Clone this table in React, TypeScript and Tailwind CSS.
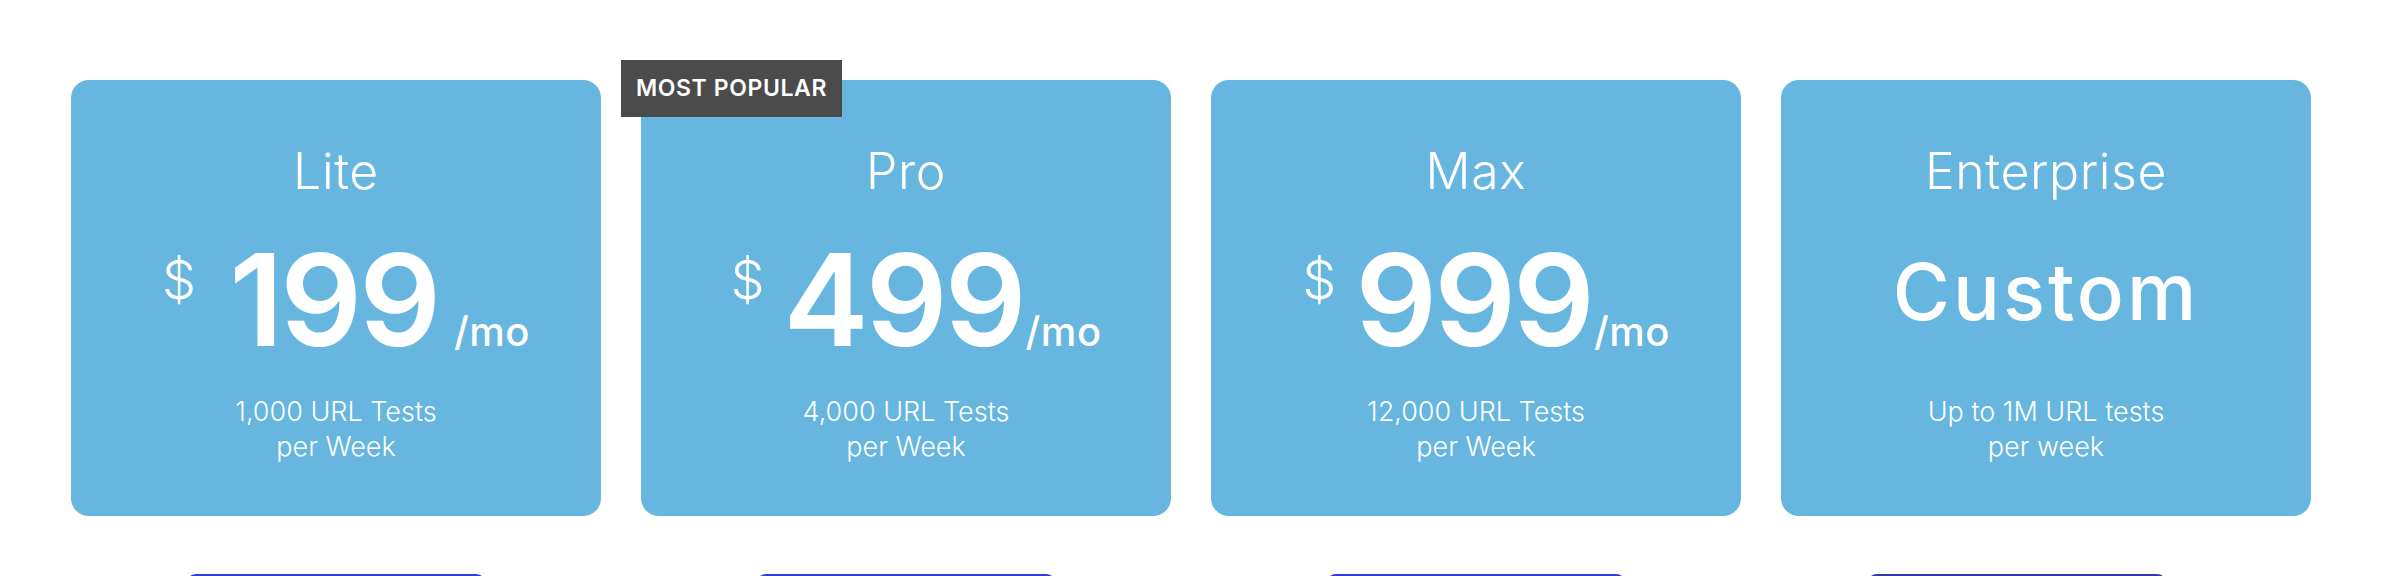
import React from "react";

type Plan = {
  name: string;
  price?: string;
  custom?: string;
  line1: string;
  line2: string;
  popular?: boolean;
  gapL: string;
  gapR: string;
  btn: string;
};

const plans: Plan[] = [
  { name: "Lite", price: "199", line1: "1,000 URL Tests", line2: "per Week", gapL: "mr-[33px]", gapR: "ml-[16px]", btn: "bg-[#2b3fd4]" },
  { name: "Pro", price: "499", line1: "4,000 URL Tests", line2: "per Week", popular: true, gapL: "mr-[19px]", gapR: "ml-[2px]", btn: "bg-[#2b3fd4]" },
  { name: "Max", price: "999", line1: "12,000 URL Tests", line2: "per Week", gapL: "mr-[19px]", gapR: "ml-[2px]", btn: "bg-[#2b3fd4]" },
  { name: "Enterprise", custom: "Custom", line1: "Up to 1M URL tests", line2: "per week", gapL: "", gapR: "", btn: "bg-[#2e3ca8] mr-[58px]" },
];

function Card({ p }: { p: Plan }) {
  return (
    <div className="flex w-[530px] shrink-0 flex-col items-center">
      <div className="relative flex h-[436px] w-full flex-col items-center rounded-[18px] bg-[#66b6e0] pt-[66px] text-white">
        {p.popular && (
          <div className="absolute left-[-20px] top-[-20px] flex h-[57px] w-[221px] items-center justify-center bg-[#4b4b4b] font-['Inter'] text-[23px] font-semibold tracking-[0.6px] text-white">
            MOST POPULAR
          </div>
        )}
        <div className="font-['Inter'] text-[50px] font-light leading-[50px] tracking-[0.6px]">{p.name}</div>
        <div className="mt-[40px] flex h-[128px] items-start justify-center">
          {p.price ? (
            <div className="flex items-baseline pl-[20px]">
              <span className={`self-start mt-[17px] font-['Inter'] text-[54px] font-light leading-[54px] ${p.gapL}`}>$</span>
              <span className="font-['Inter'] text-[128px] font-semibold leading-[128px] tracking-[-3px]">{p.price}</span>
              <span className={`font-['Inter'] text-[40px] font-medium leading-[40px] tracking-[0.5px] ${p.gapR}`}>/mo</span>
            </div>
          ) : (
            <div className="mt-[17px] font-['Inter'] text-[78px] font-medium leading-[78px] tracking-[3px]">{p.custom}</div>
          )}
        </div>
        <div className="mt-[30px] flex flex-col items-center font-['Inter'] text-[27px] font-light leading-[35px]">
          <span>{p.line1}</span>
          <span>{p.line2}</span>
        </div>
      </div>
      <div className={`mt-[58px] h-[60px] w-[300px] shrink-0 rounded-[10px] ${p.btn}`} />
    </div>
  );
}

export default function App() {
  return (
    <div className="h-[576px] w-full overflow-hidden bg-white">
      <div className="flex gap-[40px] pl-[71px] pr-[79px] pt-[80px]">
        {plans.map((p) => (
          <Card key={p.name} p={p} />
        ))}
      </div>
    </div>
  );
}
